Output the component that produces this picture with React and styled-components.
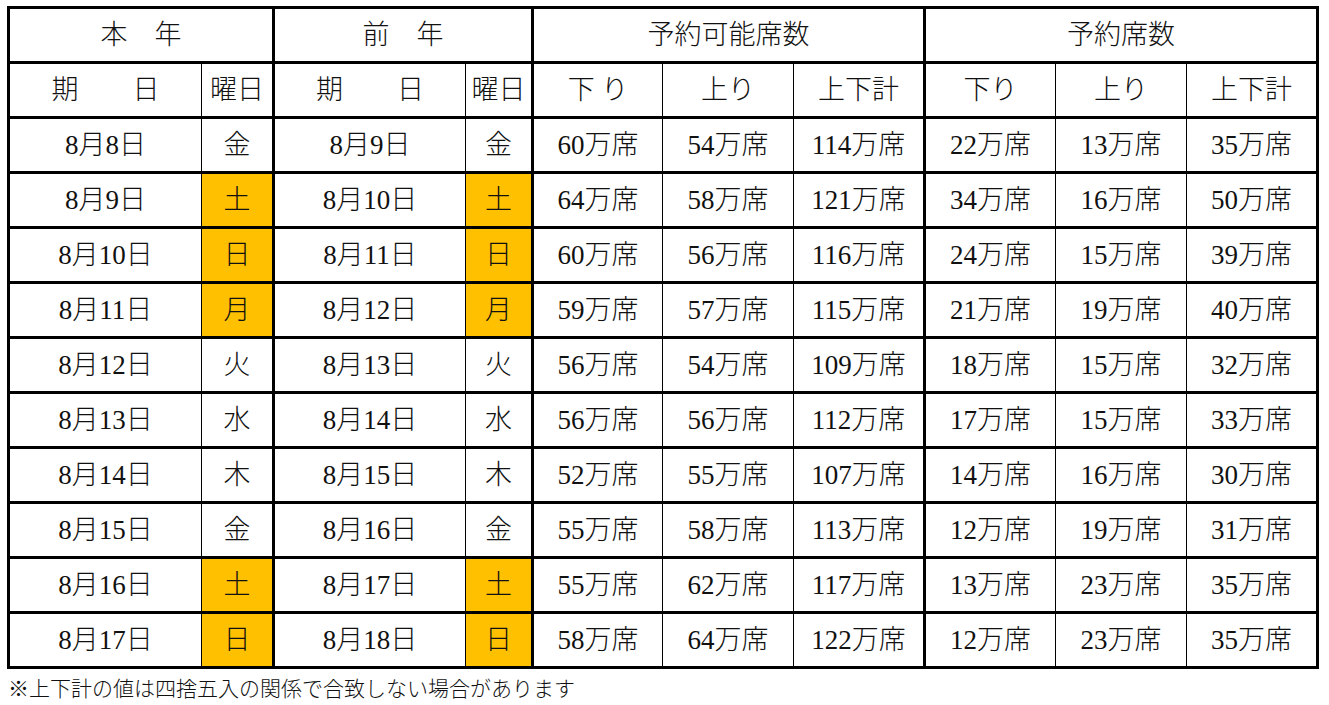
import React from 'react';
import styled, { createGlobalStyle } from 'styled-components';

const GlobalStyle = createGlobalStyle`
  html, body {
    margin: 0;
    padding: 0;
    background: #fff;
  }
  * {
    box-sizing: border-box;
  }
`;

const Page = styled.div`
  padding: 6px 0 0 7px;
  font-family: "Liberation Serif", "Noto Sans CJK JP", serif;
  color: #111;
`;

const Sheet = styled.div`
  display: grid;
  grid-template-columns: 192px 73px 191px 68px 129px 131px 132px 130px 131px 132px;
  grid-auto-rows: 55px;
  width: max-content;
  border-top: 3px solid #000;
  border-left: 3px solid #000;
`;

const Cell = styled.div`
  grid-column: span ${p => p.$span || 1};
  display: flex;
  align-items: center;
  justify-content: center;
  border-bottom: 3px solid #000;
  border-right: ${p => (p.$thick ? '3px' : '1px')} solid #000;
  background: ${p => (p.$mark ? '#ffc000' : '#fff')};
  font-size: 27px;
  font-weight: 300;
  white-space: pre;
  line-height: 1;
`;

const Note = styled.p`
  margin: 6px 0 0 1px;
  font-family: "Noto Sans CJK JP", sans-serif;
  font-size: 21px;
  font-weight: 300;
  line-height: 1.2;
  color: #111;
`;

// 太線で区切るグループ境界の列
const thickCols = [1, 3, 6, 9];

const groups = [
  { label: '本　年', span: 2 },
  { label: '前　年', span: 2 },
  { label: '予約可能席数', span: 3 },
  { label: '予約席数', span: 3 },
];

const subHeads = ['期　　日', '曜日', '期　　日', '曜日', '下 り', '上り', '上下計', '下り', '上り', '上下計'];

const rows = [
  { now: '8月8日', nowDay: '金', prev: '8月9日', prevDay: '金', seats: [60, 54, 114, 22, 13, 35] },
  { now: '8月9日', nowDay: '土', prev: '8月10日', prevDay: '土', seats: [64, 58, 121, 34, 16, 50], mark: true },
  { now: '8月10日', nowDay: '日', prev: '8月11日', prevDay: '日', seats: [60, 56, 116, 24, 15, 39], mark: true },
  { now: '8月11日', nowDay: '月', prev: '8月12日', prevDay: '月', seats: [59, 57, 115, 21, 19, 40], mark: true },
  { now: '8月12日', nowDay: '火', prev: '8月13日', prevDay: '火', seats: [56, 54, 109, 18, 15, 32] },
  { now: '8月13日', nowDay: '水', prev: '8月14日', prevDay: '水', seats: [56, 56, 112, 17, 15, 33] },
  { now: '8月14日', nowDay: '木', prev: '8月15日', prevDay: '木', seats: [52, 55, 107, 14, 16, 30] },
  { now: '8月15日', nowDay: '金', prev: '8月16日', prevDay: '金', seats: [55, 58, 113, 12, 19, 31] },
  { now: '8月16日', nowDay: '土', prev: '8月17日', prevDay: '土', seats: [55, 62, 117, 13, 23, 35], mark: true },
  { now: '8月17日', nowDay: '日', prev: '8月18日', prevDay: '日', seats: [58, 64, 122, 12, 23, 35], mark: true },
];

const App = () => {
  return (
    <Page>
      <GlobalStyle />
      <Sheet>
        {groups.map(g => (
          <Cell key={g.label} $span={g.span} $thick>
            {g.label}
          </Cell>
        ))}
        {subHeads.map((h, i) => (
          <Cell key={i} $thick={thickCols.includes(i)}>
            {h}
          </Cell>
        ))}
        {rows.map(r => {
          const cells = [
            { text: r.now },
            { text: r.nowDay, mark: r.mark },
            { text: r.prev },
            { text: r.prevDay, mark: r.mark },
            ...r.seats.map(n => ({ text: `${n}万席` })),
          ];
          return cells.map((c, i) => (
            <Cell key={`${r.now}-${i}`} $thick={thickCols.includes(i)} $mark={c.mark}>
              {c.text}
            </Cell>
          ));
        })}
      </Sheet>
      <Note>※上下計の値は四捨五入の関係で合致しない場合があります</Note>
    </Page>
  );
};

export default App;
